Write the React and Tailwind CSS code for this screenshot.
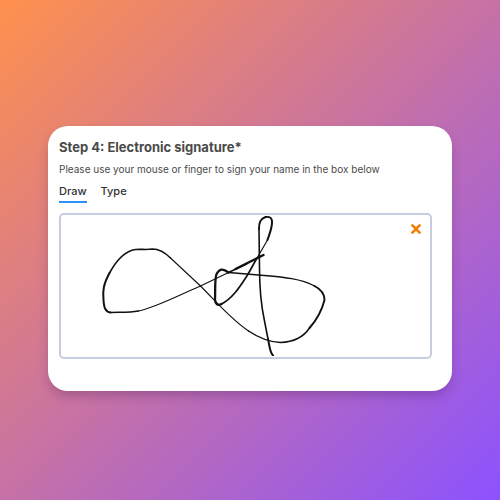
import { useState } from "react";

const tabs = ["Draw", "Type"];

function Signature() {
  return (
    <svg
      viewBox="61 215 368 141"
      className="h-[141px] w-full"
      fill="none"
      stroke="#111111"
      strokeLinecap="round"
      strokeLinejoin="round"
      role="img"
      aria-label="Signature"
    >
      {/* left loop */}
      <path d="M200 286L170 258" strokeWidth="1.1" />
      <path d="M170 258C163 251 158 249 152 249C146 250 141 249 135 249.500C124 251 115 262 109 273" strokeWidth="1.6" />
      <path d="M109 273C103 284 102 291 103 300C103.500 308 105 312 110 312.500" strokeWidth="2" />
      <path d="M110 312.500C119 312 128 313 138 311" strokeWidth="1.5" />
      <path d="M138 311C156 307 172 298 200 286L228 272.500" strokeWidth="1.1" />
      <path d="M228 272.500L246 264" strokeWidth="1.6" />
      <path d="M235 269L263 255" strokeWidth="2.4" />
      {/* right loop */}
      <path d="M200 286C216 302 230 319 248 331" strokeWidth="1.1" />
      <path d="M248 331C260 339 269 342 280 342.500C293 342 303 337 309 328" strokeWidth="1.5" />
      <path d="M309 328C317 319 322 308 324 300C324 294 320 289 314 286" strokeWidth="1.9" />
      <path d="M314 286C299 278 280 277 258 275L228 272.500" strokeWidth="1.4" />
      {/* inner loop */}
      <path d="M228 272.500C222 268 219 269 216 274C214 280 215 290 214.500 300C215 304 217 306 221 304" strokeWidth="2.3" />
      <path d="M221 304C233 298 241 284 247 275C250 270 253 264 256 259" strokeWidth="1.7" />
      <path d="M256 259L267 240" strokeWidth="1.2" />
      {/* stem */}
      <path d="M267 240C269 234 272 227 271.500 221C271 217 269 216.500 265 217C260 219 258.500 222 258.500 229" strokeWidth="2" />
      <path d="M258.500 229L259 268C259 288 261 307 264 321L267.500 339" strokeWidth="1.6" />
      <path d="M267.500 339C269 345 269 352 272.500 355.500" strokeWidth="2" />
    </svg>
  );
}

export default function App() {
  const [active, setActive] = useState("Draw");
  const [signed, setSigned] = useState(true);

  return (
    <div className="flex min-h-screen flex-col bg-linear-[135deg,#ff914d,#8c52ff] px-12 pt-[126px] font-['Inter','Liberation_Sans',sans-serif] text-[#4a4a4a]">
      <section className="rounded-[20px] bg-white pt-3 pr-5 pb-8 pl-[11px] shadow-[0_6px_12px_-2px_rgba(60,20,80,0.3)]">
        <h1 className="text-[13px] leading-[18px] font-bold">
          Step 4: Electronic signature*
        </h1>
        <p className="mt-1 text-[10px] leading-[18px]">
          Please use your mouse or finger to sign your name in the box below
        </p>
        <div className="mt-1 flex gap-3.5">
          {tabs.map((tab) => (
            <button
              key={tab}
              type="button"
              onClick={() => setActive(tab)}
              className={
                "border-b-2 pb-px text-[11px] leading-[18px] font-medium text-[#333333] " +
                (tab === active ? "border-[#2e90fa]" : "border-transparent")
              }
            >
              {tab}
            </button>
          ))}
        </div>
        <div className="relative mt-2.5 h-[146px] rounded-[5px] border-2 border-[#c6cddf]">
          {signed && <Signature />}
          <button
            type="button"
            aria-label="Clear signature"
            onClick={() => setSigned(false)}
            className="absolute top-[7px] right-[7px] p-px"
          >
            <svg viewBox="0 0 10 10" className="size-3" stroke="#f57c0a" strokeWidth="2.2" strokeLinecap="round">
              <path d="M2 2l6 6M8 2l-6 6" />
            </svg>
          </button>
        </div>
      </section>
    </div>
  );
}
